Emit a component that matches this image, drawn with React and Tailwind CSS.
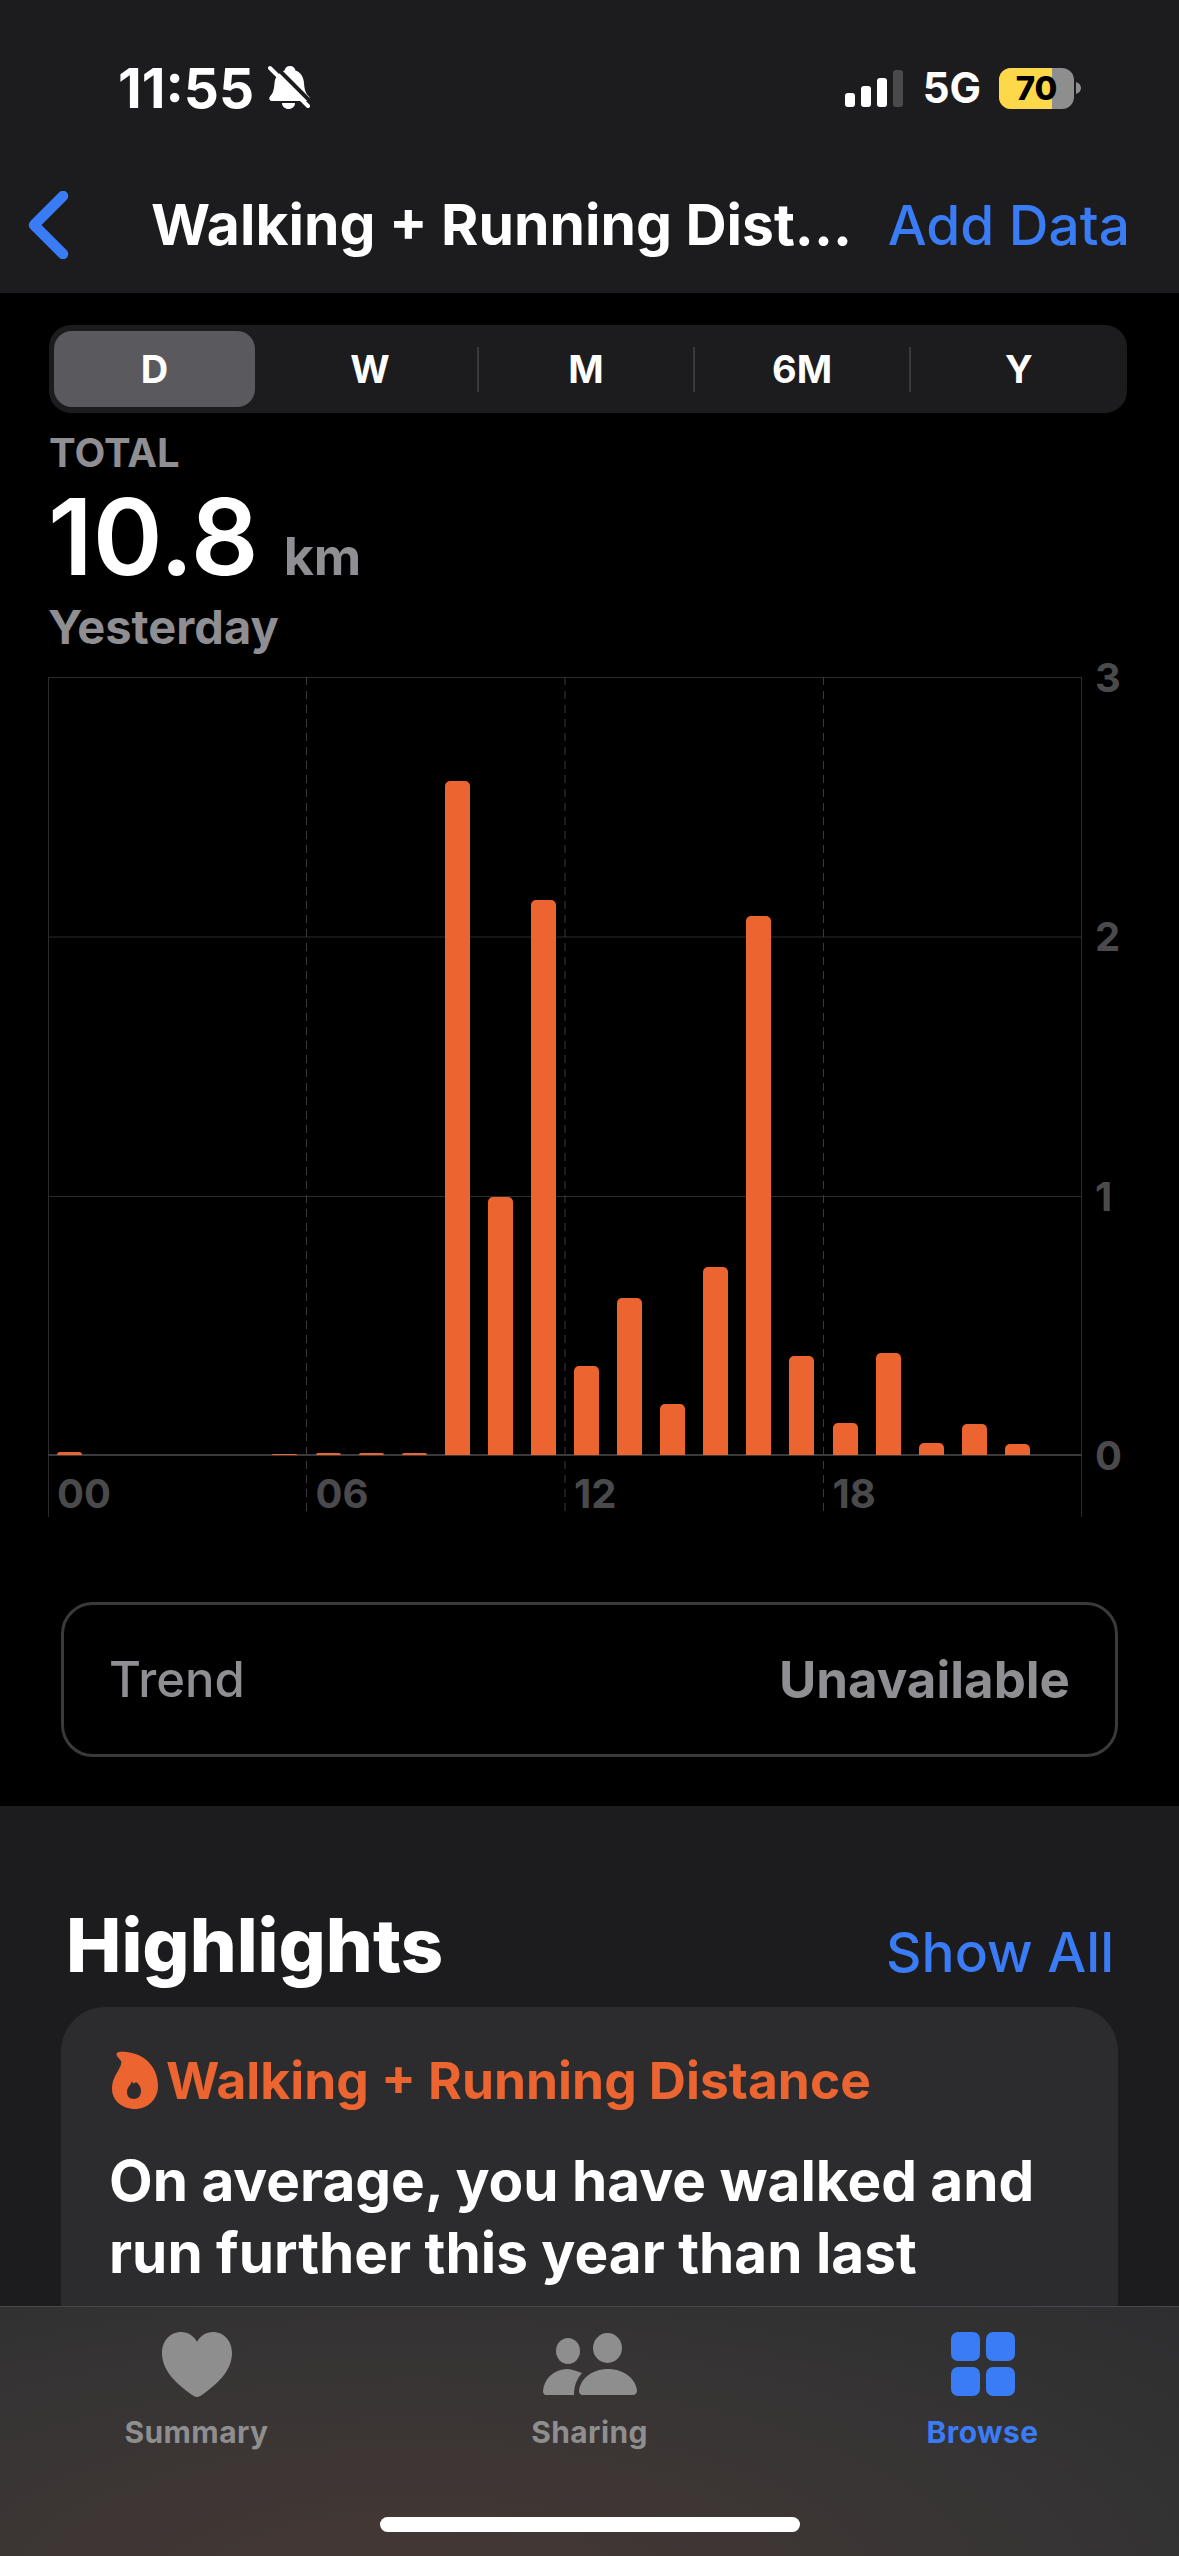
const hours = [3,0,0,0,0,1,2,2,2,674,258,555,89,157,51,188,539,99,32,102,12,31,11,0];

function Bell() {
  return (
    <svg width="42" height="44" viewBox="0 0 42 44" className="ml-[14px] mt-[-2px]">
      <path d="M22 1c3 0 5 2 5.500 4.500C33 7.500 35.500 12 36 18c.5 7 1.500 10 5 13.500 1.500 2 .5 4.500-2 4.500H4c-2.500 0-3.500-2.500-2-4.500C5 28.500 6 25 6.500 18 7 12 11 7.500 16.500 5.500 17 3 19 1 22 1Z" fill="#fff" />
      <path d="M14 38h13c0 3.500-3 6-6.500 6S14 41.500 14 38Z" fill="#fff" />
      <path d="M6 0 44 38" stroke="#1c1c1e" strokeWidth="4" />
      <path d="M2 3 40 41" stroke="#fff" strokeWidth="4" strokeLinecap="round" />
    </svg>
  );
}

function Signal() {
  return (
    <div className="flex items-end gap-[6px] h-[37px]">
      <div className="w-[10px] h-[14px] rounded-[3px] bg-white" />
      <div className="w-[10px] h-[21px] rounded-[3px] bg-white" />
      <div className="w-[10px] h-[29px] rounded-[3px] bg-white" />
      <div className="w-[10px] h-[37px] rounded-[3px] bg-[#4a4a4c]" />
    </div>
  );
}

function Battery() {
  return (
    <div className="flex items-center gap-[2px]">
      <div className="relative w-[75px] h-[41px] rounded-[12px] overflow-hidden bg-[#8e8e8e] flex items-center justify-center">
        <div className="absolute inset-y-0 left-0 w-[53px] bg-[#fdd84a]" />
        <span className="relative text-black text-[33px] leading-[33px] font-extrabold">70</span>
      </div>
      <svg width="5" height="12" viewBox="0 0 5 12"><path d="M0 0c3 1 5 3 5 6s-2 5-5 6Z" fill="#8e8e8e" /></svg>
    </div>
  );
}

function Chart() {
  const gridV = [258.5, 517, 775.5];
  const gridH = [0, 259.5, 519];
  return (
    <div className="flex mt-[29px]">
      <div className="relative w-[1034px] h-[840px] shrink-0">
        <svg width="1034" height="840" viewBox="0 0 1034 840" className="absolute inset-0">
          <path d="M0.500 0V840M1033.500 0V840" stroke="#2c2c2e" strokeWidth="1" />
          {gridH.map((y) => (
            <path key={y} d={`M0 ${y + 0.5}H1034`} stroke="#2c2c2e" strokeWidth="1" />
          ))}
          {gridV.map((x) => (
            <path key={x} d={`M${x} 0V840`} stroke="#3a3a3c" strokeWidth="1" strokeDasharray="8 6" />
          ))}
          <path d="M0 778H1034" stroke="#3a3a3c" strokeWidth="2" />
        </svg>
        <div className="absolute left-0 right-0 top-0 h-[778px] grid items-end [grid-template-columns:repeat(24,1fr)]">
          {hours.map((h, i) => (
            <div key={i} className="flex justify-center items-end h-full">
              <div className="w-[25px] bg-[#ec6430] rounded-t-[5px]" style={{ height: h }} />
            </div>
          ))}
        </div>
        <div className="absolute left-0 right-0 top-[798px] grid grid-cols-4 text-[40px] leading-[38px] font-bold text-[#4a4a4c]">
          <span className="pl-[9px]">00</span>
          <span className="pl-[9px]">06</span>
          <span className="pl-[9px]">12</span>
          <span className="pl-[9px]">18</span>
        </div>
      </div>
      <div className="ml-[13px] -mt-[18px] h-[816px] flex flex-col justify-between text-[40px] leading-[38px] font-bold text-[#4a4a4c]">
        <span>3</span>
        <span>2</span>
        <span>1</span>
        <span>0</span>
      </div>
    </div>
  );
}

function Flame() {
  return (
    <svg width="46" height="58" viewBox="0 0 46 58" className="shrink-0 ml-[3px]">
      <path
        fillRule="evenodd"
        d="M5 2C8 0 14 1 20 2C34 5 46 17 46 35C46 48 36 58 23 58C10 58 0 49 0 38C0 30 3 25 6 20C8 16 10 13 9 10C7 7 3 4 5 2ZM20 30C21 33 22 33 24 31C27 33 29 36 29 40C29 45 26 48 22 48C17 48 15 45 15 41C15 36 19 34 20 30Z"
        fill="#ec6430"
      />
    </svg>
  );
}

function Tab({ icon, label, color }) {
  return (
    <div className="flex flex-col items-center">
      <div className="h-[66px] flex items-center">{icon}</div>
      <span className={`mt-[20px] text-[30px] leading-[30px] font-bold tracking-[0.4px] ${color}`}>{label}</span>
    </div>
  );
}

export default function App() {
  return (
    <div className="relative w-[1179px] h-[2556px] overflow-hidden bg-black flex flex-col font-[Inter,sans-serif] text-white">
      <header className="h-[293px] shrink-0 bg-[#1c1c1e]">
        <div className="flex items-center justify-between pt-[66px] pl-[118px] pr-[98px] h-[110px]">
          <div className="flex items-center">
            <span className="text-[55px] leading-[44px] font-bold">11:55</span>
            <Bell />
          </div>
          <div className="flex items-center">
            <Signal />
            <span className="ml-[20px] mr-[18px] text-[42px] leading-[38px] font-bold">5G</span>
            <Battery />
          </div>
        </div>
        <div className="flex items-center h-[90px] mt-[70px] pl-[28px] pr-[49px]">
          <svg width="42" height="68" viewBox="0 0 42 68" className="shrink-0">
            <path d="M35 5 6 34l29 29" fill="none" stroke="#3a7cf6" strokeWidth="10.500" strokeLinecap="round" strokeLinejoin="round" />
          </svg>
          <span className="ml-[81px] text-[57px] leading-[68px] font-bold whitespace-nowrap">Walking + Running Dist...</span>
          <span className="ml-auto text-[55px] leading-[68px] font-medium text-[#3a7cf6] whitespace-nowrap">Add Data</span>
        </div>
      </header>

      <main className="h-[1513px] shrink-0 pl-[48px]">
        <div className="mt-[32px] ml-[1px] w-[1078px] h-[88px] rounded-[22px] bg-[#1c1c1e] flex items-center pl-[5px] text-[38px] font-bold">
          <div className="w-[201px] h-[76px] rounded-[18px] bg-[#5a5a5e] flex items-center justify-center">D</div>
          <div className="w-[222px] pl-[8px] flex items-center justify-center">W</div>
          <div className="w-[2px] h-[45px] bg-[#3a3a3c]" />
          <div className="w-[214px] flex items-center justify-center">M</div>
          <div className="w-[2px] h-[45px] bg-[#3a3a3c]" />
          <div className="w-[214px] flex items-center justify-center">6M</div>
          <div className="w-[2px] h-[45px] bg-[#3a3a3c]" />
          <div className="w-[216px] flex items-center justify-center">Y</div>
        </div>

        <div className="mt-[21px] ml-[1px] text-[40px] leading-[38px] font-bold text-[#8e8e93]">TOTAL</div>
        <div className="mt-[13px] flex items-baseline">
          <span className="text-[106px] leading-[104px] font-semibold">10.8</span>
          <span className="ml-[25px] text-[52px] leading-[50px] font-bold text-[#8e8e93]">km</span>
        </div>
        <div className="mt-[17px] text-[47px] leading-[42px] font-bold text-[#8e8e93]">Yesterday</div>

        <Chart />

        <div className="mt-[85px] ml-[13px] w-[1057px] h-[155px] rounded-[32px] border-[3px] border-[#3a3a3c] flex items-center justify-between pl-[45px] pr-[45px] leading-[56px] text-[#8e8e93]">
          <span className="text-[49px] font-medium">Trend</span>
          <span className="text-[51px] font-bold">Unavailable</span>
        </div>
      </main>

      <section className="flex-1 bg-[#1c1c1e] px-[61px]">
        <div className="mt-[104px] flex items-baseline justify-between pl-[5px] pr-[4px]">
          <span className="text-[74px] leading-[70px] font-extrabold">Highlights</span>
          <span className="text-[55px] leading-[54px] font-medium text-[#3a7cf6]">Show All</span>
        </div>
        <div className="mt-[27px] h-[400px] rounded-[44px] bg-[#2c2c2e] px-[48px] pt-[43px]">
          <div className="flex items-center gap-[8px] text-[#ec6430]">
            <Flame />
            <span className="text-[51.500px] leading-[60px] font-bold">Walking + Running Distance</span>
          </div>
          <p className="mt-[35px] text-[56.700px] leading-[72px] font-bold">
            On average, you have walked and<br />run further this year than last
          </p>
        </div>
      </section>

      <nav className="absolute left-0 right-0 bottom-0 h-[250px] border-t border-[#48484a] bg-[radial-gradient(ellipse_at_35%_115%,#463834_0%,#363434_60%,#2e2e30_100%)]">
        <div className="grid grid-cols-3 pt-[24px]">
          <Tab
            color="text-[#8e8e8e]"
            label="Summary"
            icon={
              <svg width="70" height="65" viewBox="0 0 70 65">
                <path d="M35 65C33 65 31 63.500 28 61.500C12 50 0 37 0 21C0 9 8 0 19 0C26 0 32 4 35 10C38 4 44 0 51 0C62 0 70 9 70 21C70 37 58 50 42 61.500C39 63.500 37 65 35 65Z" fill="#8e8e8e" />
              </svg>
            }
          />
          <Tab
            color="text-[#8e8e8e]"
            label="Sharing"
            icon={
              <svg width="94" height="62" viewBox="0 0 94 62" fill="#8e8e8e">
                <ellipse cx="25" cy="18" rx="12" ry="13" />
                <ellipse cx="64.500" cy="15" rx="14.500" ry="15" />
                <path d="M40 62C37 62 36 60 36 58C37 46 49 36 65 36C81 36 93 46 94 58C94 60 92 62 90 62Z" />
                <path d="M3 62C1 62 0 60 0 58C1 46 10 37 23 36C28 36 33 38 39 40C34 46 31 52 31 62Z" />
              </svg>
            }
          />
          <Tab
            color="text-[#3a7cf6]"
            label="Browse"
            icon={
              <div className="grid grid-cols-2 gap-[6px]">
                <div className="w-[29px] h-[29px] rounded-[7px] bg-[#3a7cf6]" />
                <div className="w-[29px] h-[29px] rounded-[7px] bg-[#3a7cf6]" />
                <div className="w-[29px] h-[29px] rounded-[7px] bg-[#3a7cf6]" />
                <div className="w-[29px] h-[29px] rounded-[7px] bg-[#3a7cf6]" />
              </div>
            }
          />
        </div>
        <div className="absolute left-[380px] bottom-[24px] w-[420px] h-[15px] rounded-full bg-white" />
      </nav>
    </div>
  );
}
